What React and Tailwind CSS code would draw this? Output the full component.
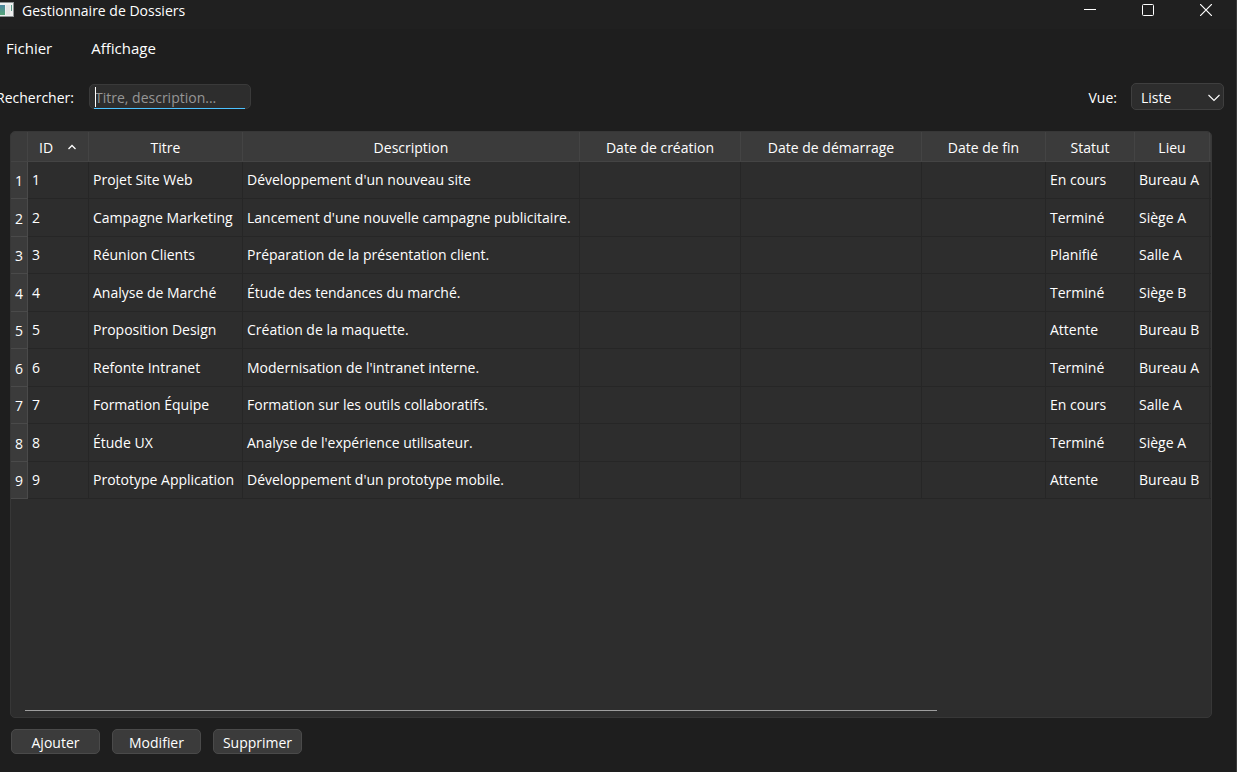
import React, { useState } from "react";

const columns = [
  { label: "Titre", width: "w-[154px]" },
  { label: "Description", width: "w-auto" },
  { label: "Date de création", width: "w-[161px]" },
  { label: "Date de démarrage", width: "w-[181px]" },
  { label: "Date de fin", width: "w-[124px]" },
  { label: "Statut", width: "w-[89px]" },
  { label: "Lieu", width: "w-[75px]" },
];

const rows = [
  ["Projet Site Web", "Développement d'un nouveau site", "", "", "", "En cours", "Bureau A"],
  ["Campagne Marketing", "Lancement d'une nouvelle campagne publicitaire.", "", "", "", "Terminé", "Siège A"],
  ["Réunion Clients", "Préparation de la présentation client.", "", "", "", "Planifié", "Salle A"],
  ["Analyse de Marché", "Étude des tendances du marché.", "", "", "", "Terminé", "Siège B"],
  ["Proposition Design", "Création de la maquette.", "", "", "", "Attente", "Bureau B"],
  ["Refonte Intranet", "Modernisation de l'intranet interne.", "", "", "", "Terminé", "Bureau A"],
  ["Formation Équipe", "Formation sur les outils collaboratifs.", "", "", "", "En cours", "Salle A"],
  ["Étude UX", "Analyse de l'expérience utilisateur.", "", "", "", "Terminé", "Siège A"],
  ["Prototype Application", "Développement d'un prototype mobile.", "", "", "", "Attente", "Bureau B"],
];

function TitleBar() {
  return (
    <header className="flex h-[29px] items-start bg-[#202020]">
      <svg className="mt-[2px] h-4 w-[14px] shrink-0" viewBox="0 0 14 16" aria-hidden="true">
        <defs>
          <linearGradient id="appIcon" x1="0" y1="0" x2="0" y2="1">
            <stop offset="0" stopColor="#4b86a0" />
            <stop offset="1" stopColor="#56a578" />
          </linearGradient>
        </defs>
        <rect x="0" y="0" width="14" height="15" fill="#8d9294" />
        <rect x="0" y="1" width="13" height="13" fill="#eef0f0" />
        <rect x="0" y="3" width="5" height="10" fill="url(#appIcon)" />
        <rect x="6" y="3" width="4" height="10" fill="#e2e4e4" />
        <rect x="11" y="3" width="1" height="6" fill="#5b9a86" />
      </svg>
      <h1 className="ml-2 text-[14px] leading-[22px]">Gestionnaire de Dossiers</h1>
      <div className="mr-px ml-auto flex">
        <button type="button" aria-label="Réduire" className="flex h-5 w-[58px] items-center justify-center">
          <svg className="h-3 w-3" viewBox="0 0 12 12" fill="none" stroke="currentColor">
            <path d="M0 5.5H12" />
          </svg>
        </button>
        <button type="button" aria-label="Agrandir" className="flex h-5 w-[58px] items-center justify-center">
          <svg className="h-3 w-3" viewBox="0 0 12 12" fill="none" stroke="currentColor">
            <rect x="0.5" y="0.5" width="11" height="11" rx="1" />
          </svg>
        </button>
        <button type="button" aria-label="Fermer" className="flex h-5 w-[58px] items-center justify-center">
          <svg className="h-3 w-3" viewBox="0 0 12 12" fill="none" stroke="currentColor" strokeWidth="1.2">
            <path d="M0 0L12 12M12 0L0 12" />
          </svg>
        </button>
      </div>
    </header>
  );
}

function FolderTable() {
  return (
    <table className="w-full min-w-[1200px] table-fixed border-separate border-spacing-0">
      <thead>
        <tr className="h-[30px] bg-[#3b3b3b]">
          <th className="w-[17px] border-r border-b border-[#444444]" aria-label="Ligne" />
          <th className="w-[61px] border-r border-b border-[#444444] p-0 pt-[2px] font-normal">
            <button type="button" className="flex w-full items-center justify-between pr-3 pl-[11px]">
              ID
              <svg className="h-2 w-2" viewBox="0 0 8 8" fill="none" stroke="currentColor" strokeWidth="1.3">
                <path d="M0.5 5L4 1.5L7.5 5" />
              </svg>
            </button>
          </th>
          {columns.map((c) => (
            <th key={c.label} scope="col" className={`${c.width} border-r border-b border-[#444444] p-0 pt-[2px] font-normal`}>
              {c.label}
            </th>
          ))}
          <th className="w-[1px] border-b border-[#444444] p-0" />
        </tr>
      </thead>
      <tbody>
        {rows.map((row, i) => (
          <tr key={row[0]} className="odd:h-[37px] even:h-[38px]">
            <th scope="row" className="border-r border-b border-[#4a4a4a] bg-[#3b3b3b] p-0 pt-[2px] text-center font-normal">
              {i + 1}
            </th>
            <td className="border-r border-b border-[#262626] p-0 pl-1">{i + 1}</td>
            {row.map((cell, j) => (
              <td key={j} className="border-r border-b border-[#262626] p-0 pl-1 whitespace-nowrap">
                {cell}
              </td>
            ))}
            <td className="border-b border-[#262626] p-0" />
          </tr>
        ))}
      </tbody>
    </table>
  );
}

export default function App() {
  const [query, setQuery] = useState("");
  const [view, setView] = useState("Liste");

  return (
    <div className="flex min-h-screen flex-col border-r border-[#3a3a3a] bg-[#1e1e1e] font-['Open_Sans','Noto_Sans',sans-serif] text-[14px] leading-5 text-white">
      <TitleBar />

      <nav className="flex h-[38px] items-center gap-[39px] pl-[6px] text-[15px]">
        <button type="button">Fichier</button>
        <button type="button">Affichage</button>
      </nav>

      <div className="mt-4 flex h-[27px] items-center pr-3">
        <label htmlFor="search" className="-ml-1 w-[93px] shrink-0 pt-[2px]">Rechercher:</label>
        <div className="relative h-[25px] w-[162px] rounded-[5px] border border-[#3a3a3a] bg-[#2d2d2d]">
          <input
            id="search"
            type="text"
            value={query}
            onChange={(e) => setQuery(e.target.value)}
            placeholder="Titre, description..."
            className="block h-full w-full bg-transparent pt-[2px] pl-[5px] caret-transparent outline-none placeholder:text-[#969696]"
          />
          <span className="absolute top-[2px] left-[5px] h-[20px] w-px bg-white" />
          <span className="absolute right-[5px] -bottom-px left-1 h-px bg-[#4cc2ff]" />
        </div>
        <label htmlFor="view" className="mr-[14px] ml-auto pt-[2px]">Vue:</label>
        <div className="relative h-full w-[93px]">
          <select
            id="view"
            value={view}
            onChange={(e) => setView(e.target.value)}
            className="h-full w-full appearance-none rounded-[5px] border border-[#3f3f3f] bg-[#2d2d2d] pt-[2px] pl-[9px]"
          >
            <option>Liste</option>
            <option>Grille</option>
          </select>
          <svg className="pointer-events-none absolute top-[11px] right-1 h-2 w-3" viewBox="0 0 12 8" fill="none" stroke="currentColor" strokeWidth="1.1">
            <path d="M0.5 1L6 6.5L11.5 1" />
          </svg>
        </div>
      </div>

      <main className="mt-[21px] mr-6 ml-[10px] flex grow flex-col overflow-hidden rounded-[5px] border border-[#373737] bg-[#2d2d2d]">
        <div className="grow overflow-hidden">
          <FolderTable />
        </div>
        <div className="px-[14px] pb-[6px]">
          <div className="h-px w-7/9 bg-[#9e9e9e]" />
        </div>
      </main>

      <footer className="mt-[11px] mb-[18px] ml-[11px] flex gap-3">
        {["Ajouter", "Modifier", "Supprimer"].map((label) => (
          <button key={label} type="button" className="flex h-[25px] w-[89px] items-center justify-center rounded-[5px] border border-[#4a4a4a] bg-[#3b3b3b] pt-[2px]">
            {label}
          </button>
        ))}
      </footer>
    </div>
  );
}
